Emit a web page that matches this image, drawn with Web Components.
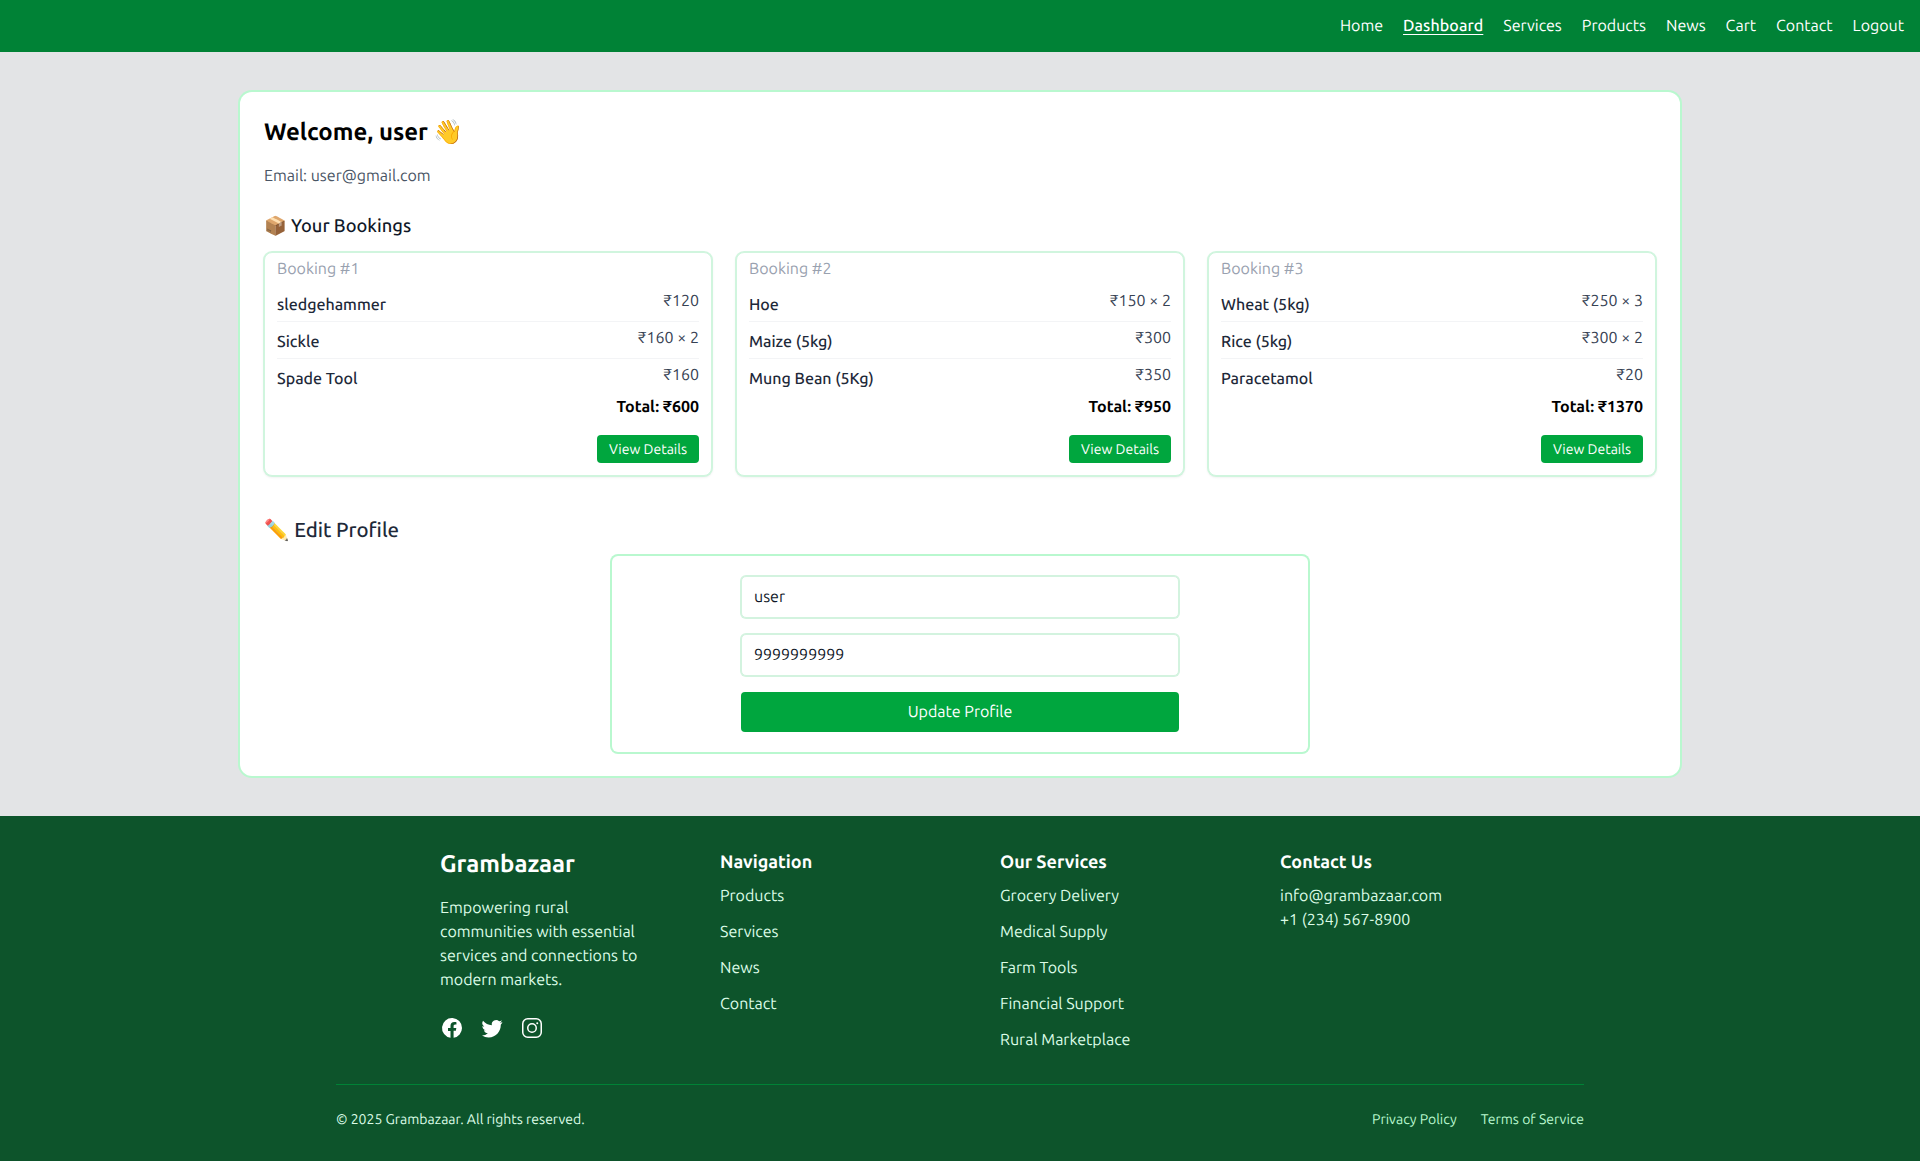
<!DOCTYPE html>
<html lang="en"><head><meta charset="utf-8"><title>Grambazaar</title>
<style>
html,body{margin:0;padding:0}
body{font-family:Ubuntu,"Noto Sans",sans-serif;background:#e3e4e6;color:#101828;font-size:16px;line-height:24px;text-rendering:geometricPrecision}
</style></head><body>
<gb-nav></gb-nav>
<gb-main></gb-main>
<gb-footer></gb-footer>
<script>
const def=(n,html)=>customElements.define(n,class extends HTMLElement{connectedCallback(){if(this.shadowRoot)return;this.attachShadow({mode:'open'}).innerHTML=typeof html==='function'?html(this):html;}});
def('gb-nav',`<style>:host{display:flex;justify-content:flex-end;gap:20px;align-items:center;height:52px;background:#008236;padding:0 16px;color:#fff}
a{color:#fff;text-decoration:none}a.on{font-weight:500;letter-spacing:.1px;text-decoration:underline;text-underline-offset:3px}</style>
${['Home','Dashboard','Services','Products','News','Cart','Contact','Logout'].map(t=>`<a href="#" class="${t=='Dashboard'?'on':''}">${t}</a>`).join('')}`);
def('gb-booking',el=>{const items=JSON.parse(el.getAttribute('items'));return `<style>:host{display:block;border:1px solid #d0f5de;border-radius:8px;padding:4px 12px 12px;background:#fff;box-shadow:0 0 0 1px #d0f5de,0 1px 3px rgba(0,0,0,.1)}
.t{color:#99a1af;margin-bottom:4px;height:24px}
.r{display:flex;justify-content:space-between;height:28px;padding:4px 0;border-bottom:1px solid #f3f4f6}
.r:last-child{border-bottom:0}.n{padding-top:4px;font-weight:500;color:#1e2939}.p{color:#364153}
.tot{text-align:right;font-weight:700;color:#000;height:24px}
.f{display:flex;justify-content:flex-end;margin-top:16px}
button{font-family:inherit;font-size:14px;line-height:20px;text-rendering:inherit;background:#00a63e;color:#fff;border:0;border-radius:4px;height:28px;padding:0 12px}</style>
<div class="t">${el.getAttribute('name')}</div><div>${items.map(i=>`<div class="r"><span class="n">${i[0]}</span><span class="p">${i[1]}</span></div>`).join('')}</div>
<div class="tot">${el.getAttribute('total')}</div><div class="f"><button>View Details</button></div>`});
def('gb-profile',`<style>:host{display:block;box-sizing:border-box;width:696px;margin:12px auto 0;border-radius:6px;padding:20px 0;background:#fff;box-shadow:0 0 0 2px #b9f8cf}
form{display:flex;flex-direction:column;gap:16px;width:438px;margin:0 auto}
input{font:inherit;text-rendering:inherit;color:#101828;height:42px;box-sizing:border-box;border:1px solid #d3f3df;box-shadow:0 0 0 1px #d3f3df;border-radius:5px;padding:0 12px;outline:0;width:100%}
button{font:inherit;text-rendering:inherit;background:#00a63e;color:#fff;border:0;border-radius:4px;height:40px}</style>
<form onsubmit="return false"><input value="user"><input value="9999999999"><button>Update Profile</button></form>`);
def('gb-main',`<style>:host{display:block;box-sizing:border-box;width:1440px;height:684px;margin:40px auto;border-radius:12px;background:#fff;padding:24px;box-shadow:0 0 0 2px #b9f8cf}
h1{font-size:24px;line-height:32px;height:32px;font-weight:700;margin:0;color:#000}
p{margin:16px 0 0;color:#4a5565;height:24px}
h2{font-weight:500;margin:0;color:#101828;height:28px}
.b{font-size:18.3px;line-height:28px;margin-top:24px}
.e{font-size:20.4px;line-height:28px;margin-top:40px;color:#1e2939}
.g{display:grid;grid-template-columns:repeat(3,1fr);gap:24px;margin-top:12px}</style>
<h1>Welcome, user 👋</h1><p>Email: user@gmail.com</p>
<h2 class="b">📦 Your Bookings</h2>
<div class="g">
<gb-booking name="Booking #1" total="Total: ₹600" items='[["sledgehammer","₹120"],["Sickle","₹160 × 2"],["Spade Tool","₹160"]]'></gb-booking>
<gb-booking name="Booking #2" total="Total: ₹950" items='[["Hoe","₹150 × 2"],["Maize (5kg)","₹300"],["Mung Bean (5Kg)","₹350"]]'></gb-booking>
<gb-booking name="Booking #3" total="Total: ₹1370" items='[["Wheat (5kg)","₹250 × 3"],["Rice (5kg)","₹300 × 2"],["Paracetamol","₹20"]]'></gb-booking>
</div>
<h2 class="e">✏️ Edit Profile</h2>
<gb-profile></gb-profile>`);
const col=(h,l)=>`<div><h3>${h}</h3>${l.map(x=>`<a href="#">${x}</a>`).join('')}</div>`;
def('gb-footer',`<style>:host{display:block;background:#0d542b;color:#dcfce7;box-sizing:border-box;padding:32px 0;height:345px}
.w{width:1248px;margin:0 auto}
.g{display:grid;grid-template-columns:repeat(4,200px);gap:80px;width:1040px;margin:0 auto 32px}
h2{font-size:24px;line-height:32px;font-weight:700;color:#fff;margin:0 0 16px}
p{margin:0}
h3{font-size:18px;line-height:28px;font-weight:700;color:#fff;margin:0 0 8px}
a{display:block;color:inherit;text-decoration:none;margin-bottom:12px}
a:last-child{margin-bottom:0}
.s{display:flex;gap:16px;margin-top:24px}svg{width:24px;height:24px;fill:#fff;display:block}
.c{display:flex;justify-content:space-between;border-top:1px solid #008236;padding-top:24px;font-size:14px;line-height:20px}
.c div{display:flex;gap:24px}.c a{margin:0;color:#b9f8cf}</style>
<div class="w"><div class="g">
<div><h2>Grambazaar</h2><p>Empowering rural communities with essential services and connections to modern markets.</p>
<div class="s">
<svg viewBox="0 0 24 24"><path d="M22 12a10 10 0 1 0-11.5 9.87v-6.99H8v-2.88h2.5V9.8c0-2.47 1.47-3.84 3.73-3.84 1.08 0 2.21.19 2.21.19v2.43h-1.24c-1.23 0-1.61.76-1.61 1.54v1.85h2.74l-.44 2.88h-2.3v6.99A10 10 0 0 0 22 12z"/></svg>
<svg viewBox="0 0 24 24"><path d="M22.46 6c-.77.35-1.6.58-2.46.69a4.3 4.3 0 0 0 1.88-2.38 8.59 8.59 0 0 1-2.72 1.04 4.28 4.28 0 0 0-7.29 3.9A12.14 12.14 0 0 1 3 4.79a4.28 4.28 0 0 0 1.32 5.71 4.25 4.25 0 0 1-1.94-.54v.05a4.28 4.28 0 0 0 3.43 4.19 4.3 4.3 0 0 1-1.93.07 4.28 4.28 0 0 0 4 2.97A8.6 8.6 0 0 1 2 19.54a12.13 12.13 0 0 0 6.56 1.92c7.88 0 12.2-6.53 12.2-12.2l-.01-.56A8.72 8.72 0 0 0 22.46 6z"/></svg>
<svg viewBox="0 0 24 24"><path fill-rule="evenodd" d="M7.75 2h8.5A5.75 5.75 0 0 1 22 7.75v8.5A5.75 5.75 0 0 1 16.25 22h-8.5A5.75 5.75 0 0 1 2 16.25v-8.5A5.75 5.75 0 0 1 7.75 2zm0 1.5A4.25 4.25 0 0 0 3.5 7.75v8.5A4.25 4.25 0 0 0 7.75 20.5h8.5a4.25 4.25 0 0 0 4.25-4.25v-8.5A4.25 4.25 0 0 0 16.25 3.5h-8.5zM12 7a5 5 0 1 1 0 10 5 5 0 0 1 0-10zm0 1.5a3.5 3.5 0 1 0 0 7 3.5 3.5 0 0 0 0-7zm5.25-2.25a1 1 0 1 1 0 2 1 1 0 0 1 0-2z"/></svg>
</div></div>
${col('Navigation',['Products','Services','News','Contact'])}
${col('Our Services',['Grocery Delivery','Medical Supply','Farm Tools','Financial Support','Rural Marketplace'])}
<div><h3>Contact Us</h3><p>info@grambazaar.com<br>+1 (234) 567-8900</p></div>
</div>
<div class="c"><span>© 2025 Grambazaar. All rights reserved.</span><div><a href="#">Privacy Policy</a><a href="#">Terms of Service</a></div></div>
</div>`);
</script>
</body></html>
